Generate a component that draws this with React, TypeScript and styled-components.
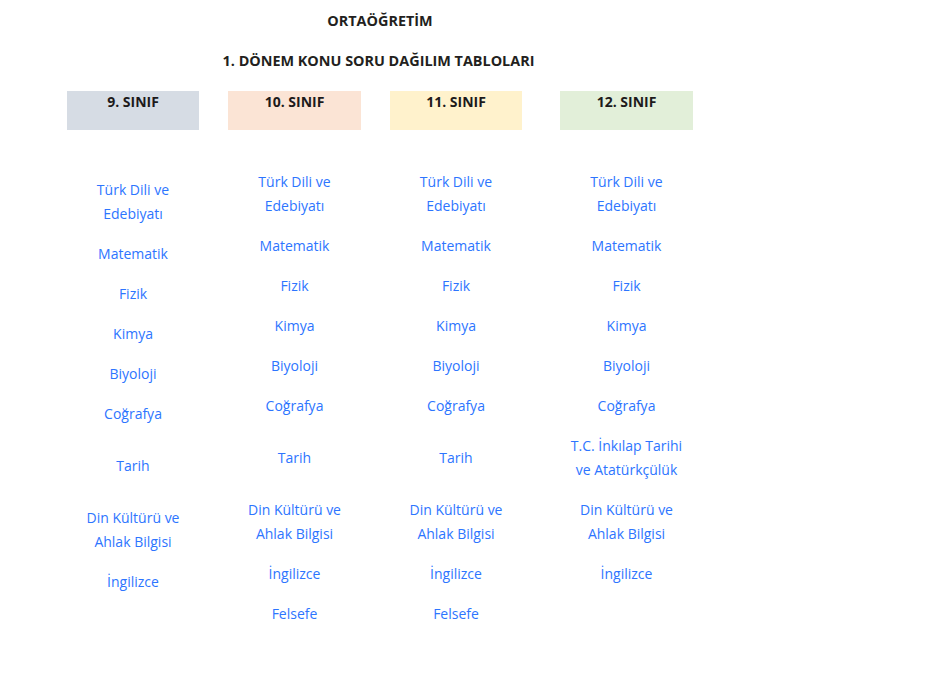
import styled, { createGlobalStyle } from "styled-components";

const GlobalStyle = createGlobalStyle`
    body {
        margin: 0;
        background: #ffffff;
        font-family: "Open Sans", "Noto Sans", sans-serif;
    }
`

const Page = styled.div`
    width: 937px;
    min-height: 676px;
    padding-top: 11px;
    box-sizing: border-box;
`

const Heading = styled.h1`
    width: 760px;
    margin: 0;
    font-size: 14.4px;
    line-height: 20px;
    font-weight: 700;
    color: #231f20;
    text-align: center;
`

const SubHeading = styled(Heading)`
    width: 757px;
    margin-top: 20px;
`

const Columns = styled.div`
    display: flex;
    align-items: flex-start;
    margin-top: 20px;
    padding-left: 67px;
`

const Column = styled.div`
    width: ${(props: { $width: number, $gap: number }) => props.$width}px;
    margin-left: ${(props: { $width: number, $gap: number }) => props.$gap}px;
    display: flex;
    flex-direction: column;
`

const GradeBox = styled.div`
    height: 39px;
    padding-top: 1px;
    box-sizing: border-box;
    background: ${(props: { $bg: string }) => props.$bg};
    font-size: 14px;
    line-height: 20px;
    font-weight: 700;
    color: #1d1a1b;
    text-align: center;
`

const SubjectList = styled.ul`
    list-style: none;
    margin: 0;
    padding: 0;
    padding-top: ${(props: { $offset: number }) => 32 + props.$offset}px;
`

const Subject = styled.li`
    height: ${(props: { $lines: number }) => props.$lines * 24 + 16}px;
    display: flex;
    flex-direction: column;
    justify-content: center;
    align-items: center;
    font-size: 14px;
    line-height: 24px;
    color: #2d75ff;
    text-align: center;
    white-space: nowrap;
`

type Row = { lines: string[], size: number }

const row = (size: number, ...lines: string[]): Row => ({ lines, size })

const common = [
    row(2, "Türk Dili ve", "Edebiyatı"),
    row(1, "Matematik"),
    row(1, "Fizik"),
    row(1, "Kimya"),
    row(1, "Biyoloji"),
    row(1, "Coğrafya"),
]

const grades = [
    {
        title: "9. SINIF", bg: "#d6dce4", width: 132, gap: 0, offset: 8,
        rows: [...common, row(2, "Tarih"), row(2, "Din Kültürü ve", "Ahlak Bilgisi"), row(1, "İngilizce")],
    },
    {
        title: "10. SINIF", bg: "#fbe4d5", width: 133, gap: 29, offset: 0,
        rows: [...common, row(2, "Tarih"), row(2, "Din Kültürü ve", "Ahlak Bilgisi"), row(1, "İngilizce"), row(1, "Felsefe")],
    },
    {
        title: "11. SINIF", bg: "#fff2cc", width: 132, gap: 29, offset: 0,
        rows: [...common, row(2, "Tarih"), row(2, "Din Kültürü ve", "Ahlak Bilgisi"), row(1, "İngilizce"), row(1, "Felsefe")],
    },
    {
        title: "12. SINIF", bg: "#e2efd9", width: 133, gap: 38, offset: 0,
        rows: [...common, row(2, "T.C. İnkılap Tarihi", "ve Atatürkçülük"), row(2, "Din Kültürü ve", "Ahlak Bilgisi"), row(1, "İngilizce")],
    },
]

const App = () => {
    return (
        <>
            <GlobalStyle />
            <Page>
                <Heading>ORTAÖĞRETİM</Heading>
                <SubHeading>1. DÖNEM KONU SORU DAĞILIM TABLOLARI</SubHeading>
                <Columns>
                    {grades.map(grade => (
                        <Column key={grade.title} $width={grade.width} $gap={grade.gap}>
                            <GradeBox $bg={grade.bg}>{grade.title}</GradeBox>
                            <SubjectList $offset={grade.offset}>
                                {grade.rows.map((r, i) => (
                                    <Subject key={i} $lines={r.size}>
                                        {r.lines.map(line => <span key={line}>{line}</span>)}
                                    </Subject>
                                ))}
                            </SubjectList>
                        </Column>
                    ))}
                </Columns>
            </Page>
        </>
    )
}

export default App;
